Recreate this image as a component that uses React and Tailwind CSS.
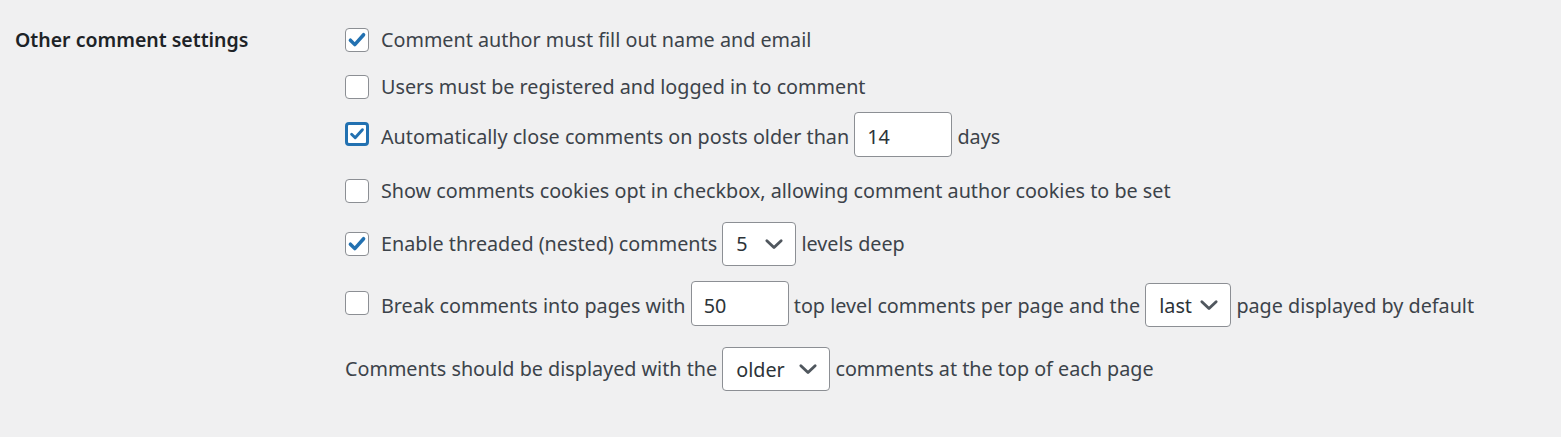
import React from "react";

const FONT = { fontFamily: '"Noto Sans", "Open Sans", sans-serif' };

function Check({ checked, focused }) {
  return (
    <span
      className={
        "inline-flex h-[24px] w-[24px] shrink-0 items-center justify-center rounded-[4px] bg-white " +
        (focused
          ? "border-[3px] border-[#2271b1]"
          : "border border-[#8c8f94]")
      }
    >
      {checked && (
        <svg width="22" height="22" viewBox="0 0 20 20">
          <path
            d="M4 10.2 L8 14.2 L16 5.2"
            fill="none"
            stroke="#2271b1"
            strokeWidth="3.2"
            strokeLinecap="round"
            strokeLinejoin="round"
          />
        </svg>
      )}
    </span>
  );
}

function TextBox({ value, w = "w-[98px]" }) {
  return (
    <input
      readOnly
      value={value}
      className={
        w +
        " h-[45px] rounded-[4px] border border-[#8c8f94] bg-white px-[12px] pt-[3px] align-baseline text-[#2c3338] outline-none"
      }
      style={FONT}
    />
  );
}

function Select({ value, w }) {
  return (
    <span
      className={
        w +
        " inline-flex h-[44px] items-center justify-between rounded-[4px] border border-[#8c8f94] bg-white pl-[13px] pr-[10px] align-baseline text-[#2c3338]"
      }
    >
      <span>{value}</span>
      <svg width="22" height="22" viewBox="0 0 20 20">
        <path
          d="M3.5 7 L10 13.2 L16.5 7"
          fill="none"
          stroke="#50575e"
          strokeWidth="2.6"
          strokeLinecap="round"
          strokeLinejoin="round"
        />
      </svg>
    </span>
  );
}

export default function App() {
  return (
    <div
      className="min-h-[437px] w-full bg-[#f0f0f1] text-[19.75px] text-[#3c434a]"
      style={FONT}
    >
      <div className="flex pl-[15px] pt-[27px]">
        <div className="w-[330px] shrink-0 text-[19.5px] font-semibold leading-[26px] text-[#1d2327]">
          Other comment settings
        </div>

        <div className="flex flex-col">
          <div className="flex h-[26px] items-center gap-[12px]">
            <Check checked />
            <span>Comment author must fill out name and email</span>
          </div>

          <div className="mt-[21px] flex h-[26px] items-center gap-[12px]">
            <Check />
            <span>Users must be registered and logged in to comment</span>
          </div>

          <div className="mt-[12px] flex items-center gap-[12px]">
            <span className="mt-[6px]">
              <Check checked focused />
            </span>
            <div>
              Automatically close comments on posts older than{" "}
              <TextBox value="14" /> days
            </div>
          </div>

          <div className="mt-[21px] flex h-[26px] items-center gap-[12px]">
            <Check />
            <span>
              Show comments cookies opt in checkbox, allowing comment author
              cookies to be set
            </span>
          </div>

          <div className="mt-[18px] flex items-center gap-[12px]">
            <Check checked />
            <div>
              Enable threaded (nested) comments{" "}
              <Select value="5" w="w-[74px]" /> levels deep
            </div>
          </div>

          <div className="mt-[15px] flex items-center gap-[12px]">
            <span className="mt-[6px]">
              <Check />
            </span>
            <div>
              Break comments into pages with <TextBox value="50" /> top level
              comments per page and the <Select value="last" w="w-[86px]" />{" "}
              page displayed by default
            </div>
          </div>

          <div className="mt-[20px]">
            Comments should be displayed with the{" "}
            <Select value="older" w="w-[108px]" /> comments at the top of each
            page
          </div>
        </div>
      </div>
    </div>
  );
}
